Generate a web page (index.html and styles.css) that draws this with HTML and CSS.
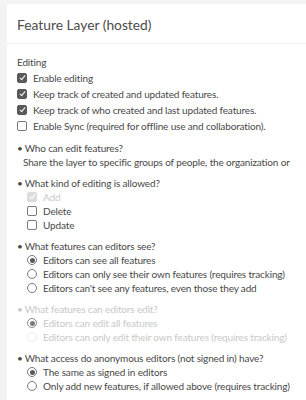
FILE: index.html
```html
<!DOCTYPE html>
<html lang="en">
<head>
  <meta charset="UTF-8">
  <title>Feature Layer Settings</title>
  <link rel="stylesheet" href="styles.css">
</head>
<body>
  <div class="panel">
    <!-- Header -->
    <div class="panel-header">Feature Layer (hosted)</div>

    <div class="panel-body">
      <div class="section-title">Editing</div>
      <div class="options">
        <label class="opt"><span class="box checked"></span>Enable editing</label>
        <label class="opt"><span class="box checked"></span>Keep track of created and updated features.</label>
        <label class="opt"><span class="box checked"></span>Keep track of who created and last updated features.</label>
        <label class="opt"><span class="box"></span>Enable Sync (required for offline use and collaboration).</label>
      </div>

      <div class="question">
        <div class="q-title">Who can edit features?</div>
        <div class="q-note">Share the layer to specific groups of people, the organization or</div>
      </div>

      <div class="question">
        <div class="q-title">What kind of editing is allowed?</div>
        <div class="sub-options">
          <label class="opt disabled"><span class="box checked"></span>Add</label>
          <label class="opt"><span class="box"></span>Delete</label>
          <label class="opt"><span class="box"></span>Update</label>
        </div>
      </div>

      <div class="question">
        <div class="q-title">What features can editors see?</div>
        <div class="sub-options">
          <label class="opt"><span class="radio checked"></span>Editors can see all features</label>
          <label class="opt"><span class="radio"></span>Editors can only see their own features (requires tracking)</label>
          <label class="opt"><span class="radio"></span>Editors can't see any features, even those they add</label>
        </div>
      </div>

      <div class="question disabled">
        <div class="q-title">What features can editors edit?</div>
        <div class="sub-options">
          <label class="opt"><span class="radio checked"></span>Editors can edit all features</label>
          <label class="opt"><span class="radio"></span>Editors can only edit their own features (requires tracking)</label>
        </div>
      </div>

      <div class="question">
        <div class="q-title">What access do anonymous editors (not signed in) have?</div>
        <div class="sub-options">
          <label class="opt"><span class="radio checked"></span>The same as signed in editors</label>
          <label class="opt"><span class="radio"></span>Only add new features, if allowed above (requires tracking)</label>
        </div>
      </div>
    </div>
  </div>
</body>
</html>
```
FILE: styles.css
```css
body {
  margin: 0;
  background-color: #f3f3f3;
  font-family: "Lato", "Open Sans", sans-serif;
  color: #484848;
  overflow: hidden;
}

.panel {
  margin: 4px 0 0 7px;
  background-color: #ffffff;
  height: 400px;
  white-space: nowrap;
  overflow: hidden;
}

.panel-header {
  height: 39px;
  line-height: 42px;
  padding-left: 10px;
  font-size: 13.8px;
  color: #4c4c4c;
  border-bottom: 1px solid #efefef;
}

.panel-body {
  padding: 11px 0 0 10px;
  font-size: 10px;
  letter-spacing: -0.15px;
}

.section-title {
  line-height: 14px;
  margin-bottom: 1px;
}

.opt {
  display: flex;
  align-items: center;
  gap: 6px;
  height: 14px;
}

.options .opt {
  height: 16px;
}

/* checkboxes */
.box {
  width: 8px;
  height: 8px;
  border: 1px solid #7a7a7a;
  border-radius: 2px;
  background: #fff;
  flex: none;
  position: relative;
}

.box.checked {
  background: #595959;
  border-color: #595959;
}

.box.checked::after {
  content: "";
  position: absolute;
  left: 2.5px;
  top: 0;
  width: 2px;
  height: 5px;
  border: solid #fff;
  border-width: 0 1.5px 1.5px 0;
  transform: rotate(40deg);
}

.opt.disabled {
  color: #c8c8c8;
}

.opt.disabled .box.checked {
  background: #dcdcdc;
  border-color: #dcdcdc;
}

/* questions */
.question {
  margin-top: 7px;
}

.q-title {
  line-height: 14px;
}

.q-title::before {
  content: "\2022";
  margin-right: 2px;
}

.q-note {
  padding-left: 6px;
  line-height: 14px;
}

.sub-options {
  padding-left: 10px;
}

/* radios */
.radio {
  width: 8px;
  height: 8px;
  border: 1px solid #7a7a7a;
  border-radius: 50%;
  background: #fff;
  flex: none;
  position: relative;
}

.radio.checked::after {
  content: "";
  position: absolute;
  left: 1.5px;
  top: 1.5px;
  width: 5px;
  height: 5px;
  border-radius: 50%;
  background: #595959;
}

.question.disabled {
  color: #c8c8c8;
}

.question.disabled .radio {
  border-color: #ebebeb;
}

.question.disabled .radio.checked {
  border-color: #8a8a8a;
}

.question.disabled .radio.checked::after {
  background: #7a7a7a;
}
```
